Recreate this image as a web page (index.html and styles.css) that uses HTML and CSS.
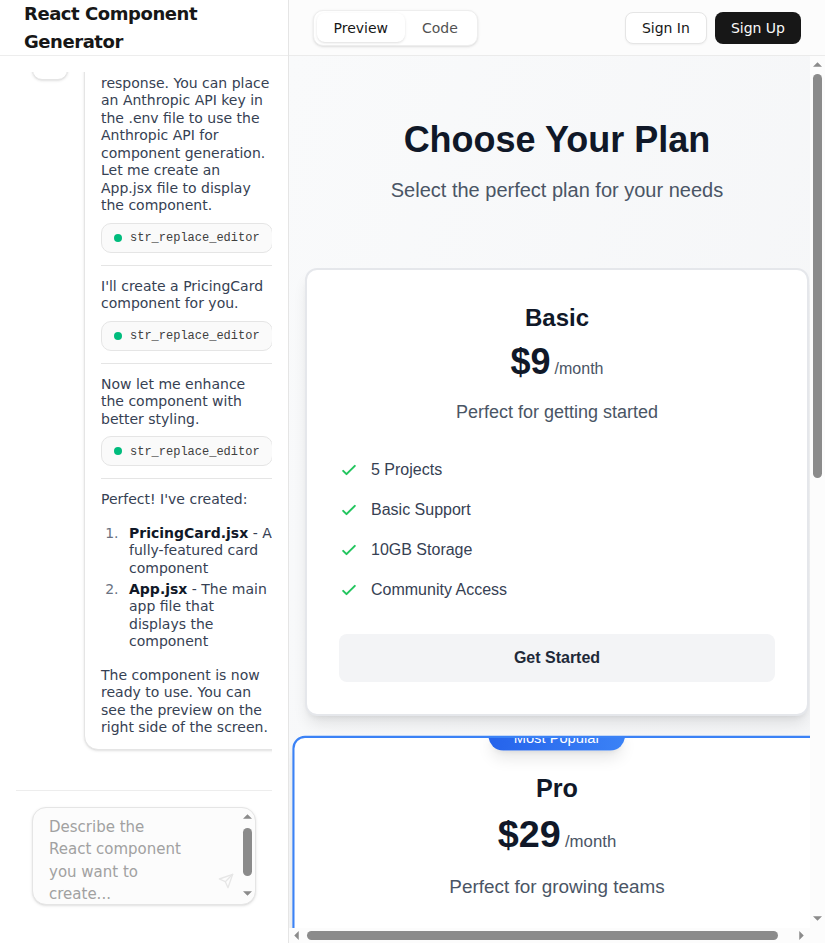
FILE: index.html
```html
<!DOCTYPE html>
<html lang="en">
<head>
<meta charset="utf-8">
<title>React Component Generator</title>
<link rel="stylesheet" href="styles.css">
</head>
<body>
<svg class="defs" aria-hidden="true">
  <symbol id="check" viewBox="0 0 24 24"><path d="M5 13l4 4L19 7" fill="none" stroke="currentColor" stroke-width="2.4" stroke-linecap="round" stroke-linejoin="round"/></symbol>
  <symbol id="arrow" viewBox="0 0 10 5"><path d="M0 5L5 0L10 5Z" fill="currentColor"/></symbol>
</svg>
<div class="app">
  <aside class="sidebar">
    <header class="sidebar-head"><h1>React Component Generator</h1></header>
    <div class="messages">
      <div class="message">
        <div class="avatar"></div>
        <div class="bubble">
          <p>response. You can place an Anthropic API key in the .env file to use the Anthropic API for component generation. Let me create an App.jsx file to display the component.</p>
          <div class="tool"><i></i><span>str_replace_editor</span></div>
          <hr>
          <p>I'll create a PricingCard component for you.</p>
          <div class="tool"><i></i><span>str_replace_editor</span></div>
          <hr>
          <p>Now let me enhance the component with better styling.</p>
          <div class="tool"><i></i><span>str_replace_editor</span></div>
          <hr>
          <p>Perfect! I've created:</p>
          <ol>
            <li><strong>PricingCard.jsx</strong> - A fully-featured card component</li>
            <li><strong>App.jsx</strong> - The main app file that displays the component</li>
          </ol>
          <p>The component is now ready to use. You can see the preview on the right side of the screen.</p>
        </div>
      </div>
    </div>
    <div class="composer">
      <div class="prompt">
        <div class="placeholder">Describe the React component you want to create...</div>
        <svg class="send" viewBox="0 0 24 24" fill="none" stroke="currentColor" stroke-width="2" stroke-linecap="round" stroke-linejoin="round"><path d="m22 2-7 20-4-9-9-4Z"/><path d="M22 2 11 13"/></svg>
        <div class="vbar small"><svg class="arrow"><use href="#arrow"/></svg><div class="thumb"></div><svg class="arrow down"><use href="#arrow"/></svg></div>
      </div>
    </div>
  </aside>
  <main class="main">
    <header class="toolbar">
      <div class="tabs"><button class="tab active">Preview</button><button class="tab">Code</button></div>
      <div class="actions"><button class="btn outline">Sign In</button><button class="btn solid">Sign Up</button></div>
    </header>
    <div class="frame">
      <div class="viewport">
        <div class="page">
          <h2>Choose Your Plan</h2>
          <p class="lead">Select the perfect plan for your needs</p>
          <div class="plans">
            <section class="card">
              <h3>Basic</h3>
              <div class="price"><b>$9</b><span>/month</span></div>
              <p class="desc">Perfect for getting started</p>
              <ul>
                <li><svg><use href="#check"/></svg>5 Projects</li>
                <li><svg><use href="#check"/></svg>Basic Support</li>
                <li><svg><use href="#check"/></svg>10GB Storage</li>
                <li><svg><use href="#check"/></svg>Community Access</li>
              </ul>
              <button class="cta">Get Started</button>
            </section>
            <section class="card popular">
              <div class="badge">Most Popular</div>
              <h3>Pro</h3>
              <div class="price"><b>$29</b><span>/month</span></div>
              <p class="desc">Perfect for growing teams</p>
            </section>
          </div>
        </div>
      </div>
      <div class="vbar"><svg class="arrow"><use href="#arrow"/></svg><div class="thumb"></div><svg class="arrow down"><use href="#arrow"/></svg></div>
      <div class="hbar"><svg class="arrow" viewBox="0 0 5 10"><path d="M5 0L0 5L5 10Z" fill="currentColor"/></svg><div class="thumb"></div><svg class="arrow" viewBox="0 0 5 10"><path d="M0 0L5 5L0 10Z" fill="currentColor"/></svg></div>
    </div>
  </main>
</div>
</body>
</html>
```
FILE: styles.css
```css
* { box-sizing: border-box; margin: 0; padding: 0; }
body { font-family: "DejaVu Sans", sans-serif; background: #fff; color: #171717; overflow: hidden; }
button { font: inherit; border: 0; background: none; color: inherit; }
.defs { display: none; }
.app { display: flex; width: 825px; height: 943px; overflow: hidden; }

.sidebar { width: 289px; flex: none; border-right: 1px solid #e5e5e5; display: flex; flex-direction: column; }
.sidebar-head { height: 56px; flex: none; padding: 0 24px; display: flex; align-items: center; border-bottom: 1px solid #ededed; }
.sidebar-head h1 { font-size: 18px; line-height: 28px; font-weight: 700; letter-spacing: -0.45px; }
.messages { height: 718px; margin: 16px 16px 0; overflow: hidden; flex: none; }
.message { display: flex; gap: 16px; width: 290px; margin-top: -28px; padding-left: 16px; align-items: flex-start; }
.avatar { width: 36px; height: 36px; flex: none; border: 1px solid #e5e5e5; border-radius: 10px; background: #fff; box-shadow: 0 1px 3px rgba(0,0,0,.1), 0 1px 2px -1px rgba(0,0,0,.1); }
.bubble { width: 205px; flex: none; padding: 29.5px 16px 12px; border: 1px solid #e5e5e5; border-radius: 14px; background: #fff; box-shadow: 0 1px 3px rgba(0,0,0,.1), 0 1px 2px -1px rgba(0,0,0,.1); font-size: 14px; line-height: 17.5px; color: #364153; }
.tool { display: flex; width: max-content; align-items: center; gap: 8px; height: 30px; margin-top: 8px; padding: 0 12px; border: 1px solid #e5e5e5; border-radius: 10px; background: #fafafa; font: 12px/16px "Liberation Mono", monospace; color: #404040; }
.tool span { padding-top: 1.6px; }
.tool i { width: 8px; height: 8px; border-radius: 50%; background: #00bc7d; }
.bubble hr { border: 0; border-top: 1px solid #e5e5e5; margin: 12px 0; }
.bubble ol { margin: 16px 0; padding-left: 22px; }
.bubble li { padding-left: 6px; }
.bubble li + li { margin-top: 3.5px; }
.bubble li::marker { color: #6a7282; }
.bubble strong { color: #101828; }

.composer { margin: 0 16px; padding: 16px; border-top: 1px solid #ededed; }
.prompt { position: relative; width: 224px; height: 98px; display: flex; justify-content: space-between; padding: 8px 3px 0 16px; border: 1px solid #e5e5e5; border-radius: 14px; background: #fcfcfc; box-shadow: 0 1px 3px rgba(0,0,0,.1), 0 1px 2px -1px rgba(0,0,0,.1); overflow: hidden; }
.placeholder { width: 138px; font-size: 15px; line-height: 22.4px; color: #a1a1a1; }
.send { position: absolute; left: 185px; top: 65px; width: 16px; height: 16px; color: #e6e6e6; }

.vbar, .hbar { display: flex; align-items: center; color: #8b8b8b; background: #fcfcfc; }
.vbar { flex-direction: column; justify-content: flex-start; }
.arrow { width: 9px; height: 5px; flex: none; }
.down { transform: rotate(180deg); }
.thumb { background: #8b8b8b; border-radius: 5px; }
.small { width: 9px; margin-top: -2px; height: 84px; background: none; }
.small .thumb { width: 9px; height: 48px; margin: 9px 0 15px; }

.main { flex: 1; min-width: 0; display: flex; flex-direction: column; }
.toolbar { height: 56px; flex: none; display: flex; align-items: center; justify-content: space-between; padding: 0 24px; background: #fcfcfc; border-bottom: 1px solid #ebebeb; font-size: 14px; }
.tabs { display: flex; align-items: center; height: 36px; padding: 3px 2px 3px 2.5px; border: 1px solid #eee; border-radius: 10px; background: #fff; box-shadow: 0 1px 3px rgba(0,0,0,.1), 0 1px 2px -1px rgba(0,0,0,.1); }
.tab { height: 29px; padding: 0 17px; border-radius: 8px; color: #525252; }
.active { color: #171717; box-shadow: 0 1px 3px rgba(0,0,0,.1), 0 1px 2px -1px rgba(0,0,0,.1); }
.actions { display: flex; gap: 8px; }
.btn { height: 32px; padding: 0 16px; border-radius: 8px; }
.outline { border: 1px solid #e5e5e5; background: #fff; box-shadow: 0 1px 2px rgba(0,0,0,.05); }
.solid { background: #171717; color: #fafafa; }

.frame { height: 887px; display: grid; grid-template-columns: 521px 15px; grid-template-rows: 872px 15px; background: #fcfcfc; }
.viewport { overflow: hidden; }
.frame > .vbar { padding-top: 6px; }
.frame > .vbar .thumb { width: 9px; height: 404px; margin: 7px 0 438px; }
.hbar { padding-left: 5px; }
.hbar .arrow { width: 5px; height: 9px; }
.hbar .thumb { width: 471px; height: 9px; margin: 0 21px 0 8px; }

.page { width: 536px; min-height: 1600px; padding: 64px 16px; background: linear-gradient(to bottom right, #f9fafb, #f3f4f6); font-family: "Liberation Sans", Arial, sans-serif; text-align: center; color: #101828; }
.page h2 { font-size: 36px; line-height: 40px; font-weight: 700; }
.lead { margin: 16px 0 64px; font-size: 20px; line-height: 28px; color: #4a5565; }
.plans { display: grid; gap: 32px; }
.card { position: relative; padding: 32px; border: 2px solid #e5e7eb; border-radius: 12px; background: #fff; box-shadow: 0 10px 15px -3px rgba(0,0,0,.1), 0 4px 6px -4px rgba(0,0,0,.1); overflow: hidden; }
.card h3 { font-size: 24px; line-height: 32px; }
.price { margin-top: 8px; display: flex; justify-content: center; align-items: baseline; line-height: 40px; }
.price b { font-size: 36px; }
.price span { margin-left: 4px; font-size: 16px; line-height: 24px; color: #4a5565; }
.desc { margin-top: 16px; font-size: 18px; line-height: 28px; color: #4a5565; }
.card ul { margin: 32px 0; display: grid; gap: 16px; list-style: none; }
.card li { display: flex; align-items: center; gap: 12px; font-size: 16px; line-height: 24px; color: #364153; }
.card li svg { width: 20px; height: 20px; color: #22c55e; }
.cta { display: block; width: 100%; height: 48px; border-radius: 8px; background: #f3f4f6; font-size: 16px; font-weight: 700; color: #1e2939; }
.popular { height: 488px; border-color: #3b82f6; transform: scale(1.05); }
.badge { position: absolute; top: -16px; left: 50%; transform: translateX(-50%); padding: 6px 24px 2px; border-radius: 14px; background: linear-gradient(to right, #2563eb, #3b82f6); color: #fff; font-size: 14px; line-height: 20px; white-space: nowrap; box-shadow: 0 10px 15px -3px rgba(0,0,0,.1), 0 4px 6px -4px rgba(0,0,0,.1); }
```
